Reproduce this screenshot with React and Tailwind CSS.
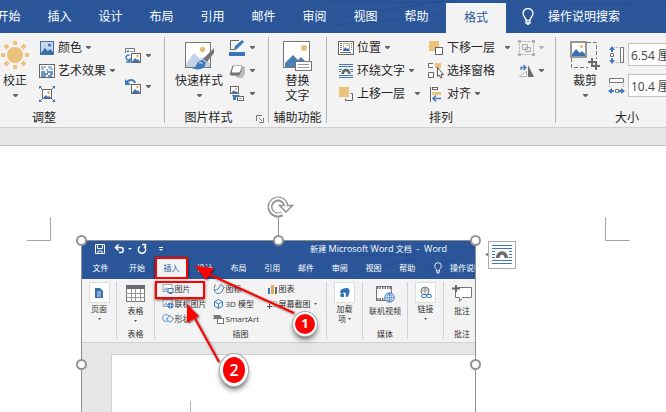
import React from "react";

const UI_FONT = "font-['Open_Sans','Noto_Sans_CJK_SC',sans-serif]";

/* ---------- shared drawing helpers ---------- */

function Svg({ w, h, children, className = "" }) {
  return (
    <svg
      width={w}
      height={h}
      viewBox={`0 0 ${w} ${h}`}
      fill="none"
      aria-hidden="true"
      className={`shrink-0 ${className}`}
    >
      {children}
    </svg>
  );
}

function Caret({ className = "text-[#666]" }) {
  return (
    <Svg w={5} h={3} className={className}>
      <path d="M0 0h5v1L3 3H2L0 1z" fill="currentColor" />
    </Svg>
  );
}

function TinyCaret() {
  return (
    <Svg w={3} h={2} className="text-[#555]">
      <path d="M0 0h3L1.500 2z" fill="currentColor" />
    </Svg>
  );
}

/* ---------- ribbon icons ---------- */

const SunIcon = () => (
  <Svg w={28} h={30}>
    <circle cx="14" cy="14" r="8" fill="#ecc27c" />
    <g stroke="#ecc27c" strokeWidth="4">
      <path d="M14 0v4M14 24v4M0 14h4M24 14h4" />
      <path d="M4 4l3 3M21 21l3 3M4 24l3-3M21 7l3-3" />
    </g>
  </Svg>
);

const ColorIcon = () => (
  <Svg w={16} h={16}>
    <rect x="1.500" y="1.500" width="13" height="13" fill="#c4d7ec" stroke="#41719c" />
    <path d="M2 13l4-5 3 3 2-2 3 3v2H2z" fill="#3a6ea8" />
    <circle cx="10.500" cy="5" r="1.500" fill="#3a6ea8" />
  </Svg>
);

const ArtisticIcon = () => (
  <Svg w={16} h={16}>
    <rect x="0.500" y="1.500" width="15" height="13" fill="#fff" stroke="#666" />
    <path d="M2 4h5M2 6h3M9 4h4M10 6h4M7 7h2" stroke="#4a7db8" />
    <path d="M2 9h4M8 9h6M2 11h7M11 11h3M2 13h5M9 13h4" stroke="#3b72b0" strokeWidth="1.500" />
  </Svg>
);

const CompressIcon = () => (
  <Svg w={16} h={16}>
    <rect x="3.500" y="3.500" width="9" height="9" fill="#fff" stroke="#666" />
    <path d="M4 12l3-3 2 2 1-1 2 2z" fill="#3a6ea8" />
    <circle cx="9.500" cy="6.500" r="1.200" fill="#e3a94c" />
    <path
      d="M0 0h3L0 3zM16 0h-3l3 3zM0 16h3L0 13zM16 16h-3l3-3z"
      fill="#3f7abd"
    />
    <path d="M1 1l2 2M15 1l-2 2M1 15l2-2M15 15l-2-2" stroke="#3f7abd" />
  </Svg>
);

const ChangePictureIcon = () => (
  <Svg w={17} h={17}>
    <path d="M0.500 6V1.500h9V5" stroke="#777" fill="#fff" />
    <path d="M1 5l2-2 2 2 2-1 2 1" fill="#3a6ea8" />
    <rect x="6.500" y="6.500" width="9" height="9" fill="#fff" stroke="#666" />
    <path d="M7 15l3-4 2 2 1-1 2 3z" fill="#3a6ea8" />
    <circle cx="12.500" cy="9" r="1.200" fill="#e3a94c" />
    <path d="M4.500 8C1 8 0 10 2 12.500L5 14M5 11v4H1" stroke="#3f7abd" strokeWidth="1.400" />
  </Svg>
);

const ResetPictureIcon = () => (
  <Svg w={17} h={17}>
    <rect x="6.500" y="6.500" width="9" height="9" fill="#fff" stroke="#666" />
    <path d="M7 15l3-4 2 2 1-1 2 3z" fill="#3a6ea8" />
    <circle cx="12.500" cy="9" r="1.200" fill="#e3a94c" />
    <path d="M1 5C4 1 9 1 10 5" stroke="#3f7abd" strokeWidth="1.800" />
    <path d="M0 1v6h6z" fill="#3f7abd" />
  </Svg>
);

const QuickStylesIcon = () => (
  <Svg w={31} h={30}>
    <rect x="1.500" y="1.500" width="25" height="25" fill="#fff" stroke="#777" />
    <circle cx="18.500" cy="8.500" r="2.700" fill="#e8be77" />
    <path d="M2 23l8-11 6 6 3-2 7 6v4H2z" fill="#c2d3e8" />
    <path d="M30 7v5l-7 9-4-3z" fill="#777" />
    <path d="M19 19l3 3c-1 3-2 5-5 6-4 1-7 0-9-1 4 0 4-3 6-6 1-1 3-2 5-2z" fill="#3f7abd" />
    <path d="M15 22c1-1 3-1 3 1" stroke="#fff" />
  </Svg>
);

const BorderPenIcon = () => (
  <Svg w={17} h={17}>
    <path d="M10 1.500H1.500v9H5" stroke="#666" />
    <path d="M5 11l1-4 7-6 2 2-7 7z" fill="#3f7abd" />
    <path d="M5 11l1-3 2 2z" fill="#777" />
    <rect x="0" y="13" width="16" height="4" fill="#3c73b9" />
  </Svg>
);

const EffectsIcon = () => (
  <Svg w={17} h={16}>
    <path d="M6 13l3 2h5l2-5V4l-2-1z" fill="#bbb" />
    <path d="M5 2.500h7.500c1 0 1.500 1 1 2L11 11c-.4 1-1 1.500-2 1.500H2.500c-1.500 0-2-1-1.500-2L3 4c.4-1 1-1.500 2-1.500z" fill="#737373" />
    <path d="M5.500 3H12c1 0 1 .6.700 1.400L11 8.500c-.3.600-.7 1-1.400 1H4c-1 0-1.200-.6-1-1.300L4.200 4c.2-.6.600-1 1.300-1z" fill="#fff" />
  </Svg>
);

const PictureLayoutIcon = () => (
  <Svg w={17} h={17}>
    <rect x="1.500" y="1.500" width="8" height="7" fill="#fff" stroke="#666" />
    <path d="M2 8l3-3 1 2 1-1 2 2z" fill="#3a6ea8" />
    <circle cx="7" cy="3.700" r="1" fill="#e3a94c" />
    <path d="M3 10h8l-2 2H7v3H4v-3z" fill="#3f7abd" />
    <rect x="8.500" y="11.500" width="6" height="4" fill="#fff" stroke="#666" />
    <path d="M10 13.500h3" stroke="#999" />
  </Svg>
);

const AltTextIcon = () => (
  <Svg w={30} h={30}>
    <rect x="0.500" y="0.500" width="26" height="26" fill="#fff" stroke="#777" />
    <circle cx="21" cy="7" r="3" fill="#e8be77" />
    <path d="M2 26v-4l8-8 5 5 3-3 8 8v2z" fill="#467fb8" />
    <rect x="12.500" y="20.500" width="16" height="9" fill="#fff" stroke="#777" />
    <path d="M15 23.500h11M15 26.500h11" stroke="#999" />
  </Svg>
);

const PositionIcon = () => (
  <Svg w={16} h={16}>
    <rect x="0.500" y="1.500" width="15" height="13" fill="#fff" stroke="#666" />
    <path d="M2 3.500h2M2 5.500h2M2 7.500h2M2 9.500h2M2 12.500h11M13 3.500h1M13 5.500h1M13 7.500h1M13 9.500h1" stroke="#777" />
    <rect x="5.500" y="3.500" width="6" height="7" fill="#fff" stroke="#b9b9b9" />
    <path d="M5 11l2-4 2 2 1-1 2 3z" fill="#3a6ea8" />
    <circle cx="9.700" cy="5.500" r="1" fill="#e3a94c" />
  </Svg>
);

const WrapIcon = () => (
  <Svg w={16} h={16}>
    <path d="M1 1.500h14M1 3.500h14M1 6.500h3M12 6.500h3M1 8.500h2M13 8.500h2M1 12.500h14M1 14.500h14" stroke="#3f7abd" />
    <path d="M3.500 11c0-7 9-7 9 0H10c0-3.500-4-3.500-4 0z" fill="#666" />
  </Svg>
);

const ForwardIcon = () => (
  <Svg w={16} h={16}>
    <rect x="1" y="1" width="10" height="10" fill="#ecc27c" />
    <path d="M12.500 7.500h2v7h-7v-2" stroke="#666" />
  </Svg>
);

const BackwardIcon = () => (
  <Svg w={16} h={16}>
    <rect x="1" y="1" width="10" height="10" fill="#ecc27c" />
    <rect x="7.500" y="7.500" width="7" height="7" fill="#fff" stroke="#666" />
  </Svg>
);

const SelectionPaneIcon = () => (
  <Svg w={16} h={17}>
    <path d="M5 1.500H0.500v4H5M0.500 10.500v5h5v-5z" stroke="#666" fill="#fff" />
    <rect x="7" y="1" width="6" height="5" fill="#ecc27c" />
    <path d="M9.500 5.500v9l2-1.500 1 3 1.500-.5-1-3h2.500z" fill="#fff" stroke="#555" />
  </Svg>
);

const AlignIcon = () => (
  <Svg w={16} h={16}>
    <path d="M2.500 1v15" stroke="#666" />
    <rect x="4.500" y="1.500" width="5" height="2" fill="#fff" stroke="#666" />
    <rect x="4" y="6" width="9" height="3" fill="#ecc27c" />
    <path d="M13 12.500H5M8 9.500l-3 3 3 3" stroke="#3f7abd" strokeWidth="1.500" />
  </Svg>
);

const GroupIcon = () => (
  <Svg w={17} h={16}>
    <path d="M3.500 1.500h10M3.500 14.500h10M1.500 4v8M15.500 4v8" stroke="#b5b5b5" strokeDasharray="2 1" />
    <path d="M4.500 4.500h5v5h-5zM7.500 7.500h5v4h-5z" stroke="#aaa" />
    <path d="M0 0h3v3H0zM14 0h3v3h-3zM0 13h3v3H0zM14 13h3v3h-3z" fill="#b0b0b0" />
  </Svg>
);

const RotateIcon = () => (
  <Svg w={17} h={16}>
    <path d="M8.500 8v5.500H1.500z" stroke="#b5b5b5" fill="#fff" />
    <path d="M10 2v12h6z" fill="#6b6b6b" />
    <path d="M3 7V4.500h4M5.500 2l2.500 2.500L5.500 7" stroke="#3f7abd" strokeWidth="1.300" />
  </Svg>
);

const CropIcon = () => (
  <Svg w={30} h={30}>
    <path d="M17 1.500h9.500V18M1.500 17v9.500H18" stroke="#777" strokeDasharray="4 2" />
    <rect x="1" y="1" width="15" height="15" fill="#fff" stroke="#777" strokeWidth="1.500" />
    <path d="M2 15v-2l4-5 4 4 2-2 3 3v2z" fill="#3a72b0" />
    <circle cx="11.500" cy="5.500" r="1.700" fill="#e8be77" />
    <path d="M22 17v8h8M18 21h8v8" stroke="#6b6b6b" strokeWidth="2" />
  </Svg>
);

const HeightIcon = () => (
  <Svg w={17} h={18}>
    <path d="M12.500 1.500h3v15h-3z" fill="#fff" stroke="#777" />
    <path d="M6 1.500h5M6 16.500h5" stroke="#aaa" strokeDasharray="1 1" />
    <path d="M4 0l3 4H5v2H3V4H1zM4 18l3-4H5v-2H3v2H1z" fill="#3f7abd" />
    <path d="M2.500 7.500h3v3h-3z" stroke="#777" />
  </Svg>
);

const WidthIcon = () => (
  <Svg w={17} h={18}>
    <path d="M1.500 1.500h14v4h-14z" fill="#fff" stroke="#777" />
    <path d="M1.500 7v4M15.500 7v4" stroke="#aaa" strokeDasharray="1 1" />
    <path d="M0 14l4-3v2h2v2H4v2zM17 14l-4-3v2h-2v2h2v2z" fill="#3f7abd" />
    <path d="M7.500 12.500h3v3h-3z" stroke="#777" />
  </Svg>
);

const LauncherIcon = () => (
  <Svg w={8} h={8}>
    <path d="M0.500 6V0.500H6M3 3l3 3M7.500 3v4.500H3" stroke="#777" />
  </Svg>
);

function BulbIcon({ w = 12, h = 17 }) {
  return (
    <svg width={w} height={h} viewBox="0 0 12 17" fill="none" aria-hidden="true" className="shrink-0">
      <path
        d="M4 12.500c0-3-3-4-3-7a5 5 0 0 1 10 0c0 3-3 4-3 7zM4 12.500v2.500h4v-2.500M5 16.500h2"
        stroke="#fff"
        strokeWidth="1.300"
      />
    </svg>
  );
}

const LayoutOptionsIcon = () => (
  <Svg w={20} h={20}>
    <path
      d="M0 0.500h20M0 3.500h20M0 6.500h3M17 6.500h3M0 9.500h3M17 9.500h3M0 12.500h3M17 12.500h3M0 15.500h20M0 18.500h20"
      stroke="#3f78b5"
    />
    <path d="M4 13c0-9 12-9 12 0h-3.500c0-4.500-5-4.500-5 0z" fill="#6b6b6b" />
  </Svg>
);

/* ---------- ribbon building blocks ---------- */

function RibbonGroup({ label, className = "", labelClass = "", extra, children }) {
  return (
    <section className={`relative flex h-[94px] shrink-0 flex-col ${className}`}>
      <div className="flex h-[75px] items-start">{children}</div>
      <div className={`text-center leading-[19px] whitespace-nowrap ${labelClass}`}>{label}</div>
      {extra}
    </section>
  );
}

const Separator = () => <div className="mt-1 h-[86px] w-px shrink-0 bg-[#b3b3b3]" />;

function BigButton({ icon, text, caret = true, className = "" }) {
  return (
    <button type="button" className={`flex shrink-0 flex-col items-center pt-2 ${className}`}>
      <span className="flex h-[30px] items-start">{icon}</span>
      <span className="mt-0.5 leading-[15px] whitespace-pre">{text}</span>
      {caret && (
        <span className="flex h-[15px] items-center">
          <Caret />
        </span>
      )}
    </button>
  );
}

function SmallButton({ icon, text, caret = true, wide = false, disabled = false, label }) {
  return (
    <button
      type="button"
      disabled={disabled}
      aria-label={label}
      className="flex h-[23px] items-center whitespace-nowrap"
    >
      {icon}
      {text && <span className="ml-[3px]">{text}</span>}
      {caret && (
        <span className={wide ? "ml-2.5" : "ml-1"}>
          <Caret className={disabled ? "text-[#b5b5b5]" : "text-[#666]"} />
        </span>
      )}
    </button>
  );
}

function SizeField({ icon, label, value, id }) {
  return (
    <div className="flex h-[31px] items-center">
      <label htmlFor={id} aria-label={label} className="w-5">
        {icon}
      </label>
      <input
        id={id}
        defaultValue={value}
        className="h-[23px] w-20 border border-[#c3c3c3] bg-white px-0.5 text-[#444] outline-none"
      />
    </div>
  );
}

function TabBar() {
  const tabs = ["开始", "插入", "设计", "布局", "引用", "邮件", "审阅", "视图", "帮助"];
  return (
    <nav className="relative flex h-[33px] overflow-hidden bg-[#2b579a] text-white">
      <svg
        width="360"
        height="33"
        viewBox="0 0 360 33"
        fill="none"
        aria-hidden="true"
        className="absolute top-0 left-[306px]"
      >
        <path
          d="M22 2h130M36 17l100-16M28 25l110-10M190 1l60 32M215 1l45 26M280 27l50-25M300 33l60-30M260 4h70"
          stroke="#264f90"
        />
      </svg>
      <div className="relative -ml-[17px] flex shrink-0">
        {tabs.map((t) => (
          <button key={t} type="button" className="w-[51px] leading-[33px]">
            {t}
          </button>
        ))}
        <button
          type="button"
          aria-current="page"
          className="mt-[3px] ml-1 w-[60px] bg-[#f3f3f3] leading-[28px] text-[#2b579a]"
        >
          格式
        </button>
        <button type="button" className="ml-4 flex items-center gap-3.5 whitespace-nowrap">
          <BulbIcon />
          操作说明搜索
        </button>
      </div>
    </nav>
  );
}

function Ribbon() {
  return (
    <div className="flex overflow-hidden border-b border-[#cfcfcf] bg-[#f3f3f3]">
      <RibbonGroup label="调整" className="w-[164px]" labelClass="pr-[76px]">
        <BigButton icon={<SunIcon />} text="校正" className="w-[30px]" />
        <div className="ml-[9px] pt-[3px]">
          <SmallButton icon={<ColorIcon />} text="颜色" />
          <SmallButton icon={<ArtisticIcon />} text="艺术效果" />
          <SmallButton icon={<CompressIcon />} caret={false} label="压缩图片" />
        </div>
        <div className="ml-2.5 flex flex-col gap-2 pt-[11px]">
          <SmallButton icon={<ChangePictureIcon />} label="更改图片" />
          <SmallButton icon={<ResetPictureIcon />} label="重置图片" />
        </div>
      </RibbonGroup>
      <Separator />
      <RibbonGroup
        label="图片样式"
        className="w-[103px]"
        labelClass="pr-4"
        extra={
          <button type="button" aria-label="设置图片格式" className="absolute right-1 bottom-1">
            <LauncherIcon />
          </button>
        }
      >
        <BigButton icon={<QuickStylesIcon />} text="快速样式" className="ml-2.5 w-[48px]" />
        <div className="ml-1.5 pt-[3px]">
          <SmallButton icon={<BorderPenIcon />} label="图片边框" />
          <SmallButton icon={<EffectsIcon />} label="图片效果" />
          <SmallButton icon={<PictureLayoutIcon />} label="图片版式" />
        </div>
      </RibbonGroup>
      <Separator />
      <RibbonGroup label="辅助功能" className="w-[57px]">
        <BigButton icon={<AltTextIcon />} text={"替换\n文字"} caret={false} className="w-full" />
      </RibbonGroup>
      <Separator />
      <RibbonGroup label="排列" className="w-[228px]">
        <div className="ml-[11px] w-[90px] pt-[3px]">
          <SmallButton icon={<PositionIcon />} text="位置" />
          <SmallButton icon={<WrapIcon />} text="环绕文字" />
          <SmallButton icon={<ForwardIcon />} text="上移一层" wide />
        </div>
        <div className="w-[90px] pt-[3px]">
          <SmallButton icon={<BackwardIcon />} text="下移一层" wide />
          <SmallButton icon={<SelectionPaneIcon />} text="选择窗格" caret={false} />
          <SmallButton icon={<AlignIcon />} text="对齐" />
        </div>
        <div className="pt-[3px]">
          <SmallButton icon={<GroupIcon />} label="组合" disabled />
          <SmallButton icon={<RotateIcon />} label="旋转" />
        </div>
      </RibbonGroup>
      <Separator />
      <RibbonGroup label="大小" className="w-[142px]">
        <BigButton icon={<CropIcon />} text="裁剪" className="ml-[13px] w-[32px]" />
        <div className="ml-[7px] pt-1.5">
          <SizeField id="pic-height" label="高度" icon={<HeightIcon />} value="6.54 厘米" />
          <SizeField id="pic-width" label="宽度" icon={<WidthIcon />} value="10.4 厘米" />
        </div>
      </RibbonGroup>
    </div>
  );
}

/* ---------- the picture inserted in the document ---------- */

const MiniSeparator = () => <div className="mt-[3px] h-[57px] w-px shrink-0 bg-[#d0d0d0]" />;

function MiniGroup({ label, className = "", children }) {
  return (
    <div className={`flex h-[63px] shrink-0 flex-col ${className}`}>
      <div className="flex h-[49px] items-start justify-center">{children}</div>
      <div className="text-center leading-[12px]">{label}</div>
    </div>
  );
}

function MiniBig({ icon, text, boxed = false, second }) {
  return (
    <button type="button" className="flex flex-col items-center pt-[3px] whitespace-nowrap">
      <span
        className={`flex items-center justify-center ${
          boxed ? "h-[21px] w-[21px] border border-[#dcdcdc] bg-white" : "h-[23px] w-[21px]"
        }`}
      >
        {icon}
      </span>
      <span className="mt-px leading-[10px]">{text}</span>
      <span className="flex h-2.5 items-center gap-0.5 leading-[10px]">{second}</span>
    </button>
  );
}

function MiniSmall({ icon, text, caret = false }) {
  return (
    <button type="button" className="flex h-[15px] items-center gap-px whitespace-nowrap">
      {icon}
      {text}
      {caret && (
        <span className="ml-0.5">
          <TinyCaret />
        </span>
      )}
    </button>
  );
}

const PagesIcon = () => (
  <Svg w={10} h={12}>
    <path d="M1 1h5l3 3v7H1z" fill="#3a6fae" />
    <path d="M3 5h4M3 7h4M3 9h4" stroke="#cfe0f3" />
  </Svg>
);

const TableIcon = () => (
  <Svg w={19} h={17}>
    <rect x="0.500" y="0.500" width="18" height="16" fill="#fff" stroke="#777" />
    <path d="M0 0h19v4H0z" fill="#6b6b6b" />
    <path d="M0 8.500h19M0 12.500h19M5.500 4v13M9.500 4v13M14.500 4v13" stroke="#999" />
  </Svg>
);

const MiniPicture = () => (
  <Svg w={12} h={10}>
    <rect x="1" y="0.500" width="9" height="7" fill="#fff" stroke="#aaa" />
    <path d="M1 7l3-4 2 3z" fill="#8fb4dc" />
    <rect x="6" y="4.500" width="5" height="4" fill="#fff" stroke="#3f7abd" />
    <path d="M7 9.500h3" stroke="#3f7abd" />
  </Svg>
);

const MiniOnlinePicture = () => (
  <Svg w={12} h={10}>
    <rect x="1" y="0.500" width="9" height="7" fill="#fff" stroke="#aaa" />
    <path d="M1 7l3-4 2 3z" fill="#8fb4dc" />
    <circle cx="8.500" cy="6.500" r="3" fill="#3f7abd" />
    <path d="M6 6.500h5M8.500 4v5" stroke="#cfe0f3" strokeWidth="0.700" />
  </Svg>
);

const MiniShapes = () => (
  <Svg w={12} h={10}>
    <circle cx="4" cy="4" r="3.500" stroke="#6a9bd0" />
    <path d="M8 1.500L11.500 5 8 8.500 4.500 5z" fill="#f3f3f3" stroke="#3f7abd" />
  </Svg>
);

const MiniIconsIcon = () => (
  <Svg w={12} h={10}>
    <path d="M6 4c0-4 4-4 4-1l1.500.5L10 5c0 3-3 4.500-5 4.500S1.500 8 1 5c1.500 1.500 4 1 5-1z" stroke="#3f7abd" />
    <path d="M3 1c-2 0-2 2-1 3" stroke="#777" />
  </Svg>
);

const Mini3D = () => (
  <Svg w={12} h={10}>
    <path d="M5.500.5l4 2.200v4.600l-4 2.200-4-2.200V2.700zM1.500 2.700l4 2.300 4-2.300M5.500 5v4.500" stroke="#3b7dbb" />
  </Svg>
);

const MiniSmartArt = () => (
  <Svg w={12} h={10}>
    <path d="M0 1h7l2 2-2 2H0l1-2z" fill="#777" />
    <rect x="4.500" y="4.500" width="6" height="5" fill="#fff" stroke="#777" />
  </Svg>
);

const MiniChart = () => (
  <Svg w={11} h={10}>
    <path d="M1 4h2v6H1z" fill="#3f7abd" />
    <path d="M4 1h3v9H4z" fill="#e0a95a" />
    <path d="M8 3h2v7H8z" fill="#666" />
  </Svg>
);

const MiniScreenshot = () => (
  <Svg w={11} h={10}>
    <rect x="2.500" y="2.500" width="7" height="5" fill="#fff" stroke="#888" strokeDasharray="1 1" />
    <path d="M0 7.500h5M2.500 5v5" stroke="#555" />
  </Svg>
);

const AddInIcon = () => (
  <Svg w={11} h={11}>
    <path d="M3 2l4-1c3 0 4 2 3.500 4L9 10l-2.500-.5L7 6 5 5.500 2 7 1 4z" fill="#2f75b5" />
    <path d="M1 8l2-2 2 1v3H2z" fill="#2f75b5" />
  </Svg>
);

const VideoIcon = () => (
  <Svg w={19} h={18}>
    <rect x="0.500" y="1.500" width="15" height="14" fill="#fff" stroke="#777" />
    <path d="M1 3h14M1 14h8" stroke="#777" strokeWidth="2" strokeDasharray="1.500 1" />
    <circle cx="13.500" cy="12.500" r="4.700" fill="#fff" stroke="#3f7abd" />
    <path d="M9 12.500h9M13.500 8v9M10 10h7M10 15h7M13.500 8c-3 3-3 6 0 9M13.500 8c3 3 3 6 0 9" stroke="#3f7abd" strokeWidth="0.700" />
  </Svg>
);

const LinkIcon = () => (
  <Svg w={13} h={13}>
    <circle cx="6" cy="5" r="4" stroke="#777" />
    <path d="M2 5h8M6 1v8M3 3h6" stroke="#777" strokeWidth="0.700" />
    <rect x="2.500" y="8.500" width="5" height="3" rx="1.500" fill="#fff" stroke="#3f7abd" />
    <rect x="7.500" y="8.500" width="5" height="3" rx="1.500" fill="#fff" stroke="#3f7abd" />
  </Svg>
);

const CommentIcon = () => (
  <Svg w={20} h={20}>
    <path d="M5.500 3.500h14v10h-9l-3 4v-4h-4V8" fill="#fff" stroke="#777" />
    <path d="M4 1v7M0 4.500h8" stroke="#666" strokeWidth="2" />
  </Svg>
);

function MiniTitleBar() {
  return (
    <div className="flex h-4 items-center">
      <svg width="90" height="12" viewBox="0 0 90 12" fill="none" stroke="#fff" aria-hidden="true">
        <path d="M13.500 1.500h9v9h-9zM15.500 1.500v4h5v-4M16 10V8h4v2" />
        <path d="M34 4.500h5c3 0 3 5 0 5h-2M36.500 1.500l-3 3 3 3" strokeWidth="1.500" />
        <path d="M46 5h4l-2 2z" fill="#fff" stroke="none" />
        <path d="M58 3.500a3.700 3.700 0 1 0 4 0M60 1.500h3.500v3" strokeWidth="1.400" />
        <path d="M77 4.500h4" />
        <path d="M77 6h4l-2 2z" fill="#fff" stroke="none" />
      </svg>
      <span className="ml-auto pr-7 text-[9px] whitespace-pre">
        <span className="text-[8px]">新建</span> Microsoft Word <span className="text-[8px]">文档</span>
        {"  -  Word"}
      </span>
    </div>
  );
}

function MiniTabs() {
  const rest = ["设计", "布局", "引用", "邮件", "审阅", "视图", "帮助"];
  return (
    <div className="flex h-[22px] whitespace-nowrap">
      <button type="button" className="w-[37px] shrink-0">文件</button>
      <button type="button" className="w-9 shrink-0">开始</button>
      <button type="button" className="w-[33px] shrink-0 border-2 border-[#f00] bg-[#f3f3f3] text-[#2b579a] shadow-sm shadow-black/60">
        插入
      </button>
      <div className="flex w-[236px] shrink-0">
        {rest.map((t) => (
          <button key={t} type="button" className="flex-1">
            {t}
          </button>
        ))}
      </div>
      <button type="button" className="ml-2.5 flex shrink-0 items-center gap-2">
        <BulbIcon w={8} h={12} />
        操作说明
      </button>
    </div>
  );
}

function MiniRibbon() {
  return (
    <div className="flex h-16 overflow-hidden border-b border-[#d0d0d0] bg-[#f3f3f3] text-[#333]">
      <MiniGroup className="w-[34px]">
        <MiniBig boxed icon={<PagesIcon />} text="页面" second={<TinyCaret />} />
      </MiniGroup>
      <MiniSeparator />
      <MiniGroup className="w-[37px]" label="表格">
        <MiniBig icon={<TableIcon />} text="表格" second={<TinyCaret />} />
      </MiniGroup>
      <MiniSeparator />
      <MiniGroup className="w-[171px]" label="插图">
        <div className="w-[51px] pt-0.5">
          <MiniSmall icon={<MiniPicture />} text="图片" />
          <MiniSmall icon={<MiniOnlinePicture />} text="联机图片" />
          <MiniSmall icon={<MiniShapes />} text="形状" />
        </div>
        <div className="w-[54px] pt-0.5">
          <MiniSmall icon={<MiniIconsIcon />} text="图标" />
          <MiniSmall icon={<Mini3D />} text="3D 模型" />
          <MiniSmall icon={<MiniSmartArt />} text="SmartArt" />
        </div>
        <div className="w-[53px] pt-0.5">
          <MiniSmall icon={<MiniChart />} text="图表" />
          <MiniSmall icon={<MiniScreenshot />} text="屏幕截图" caret />
        </div>
      </MiniGroup>
      <MiniSeparator />
      <MiniGroup className="w-[35px]">
        <MiniBig
          boxed
          icon={<AddInIcon />}
          text="加载"
          second={
            <>
              项
              <TinyCaret />
            </>
          }
        />
      </MiniGroup>
      <MiniSeparator />
      <MiniGroup className="w-11" label="媒体">
        <MiniBig icon={<VideoIcon />} text="联机视频" />
      </MiniGroup>
      <MiniSeparator />
      <MiniGroup className="w-[35px]">
        <MiniBig boxed icon={<LinkIcon />} text="链接" second={<TinyCaret />} />
      </MiniGroup>
      <MiniSeparator />
      <MiniGroup className="w-9" label="批注">
        <MiniBig icon={<CommentIcon />} text="批注" />
      </MiniGroup>
    </div>
  );
}

function Annotations() {
  return (
    <>
      <div className="absolute top-[40px] left-[73px] h-[18px] w-[50px] border-2 border-[#f00] shadow-sm shadow-black/50" />
      <svg width="240" height="150" viewBox="0 0 240 150" aria-hidden="true" className="absolute top-0 left-0 drop-shadow-[1px_1px_1px_rgba(0,0,0,0.5)]">
        <g stroke="#f00" strokeWidth="2">
          <path d="M124 32l88 40M110 72l27 49" />
        </g>
        <path d="M113 25l19 2-8 12zM105 63l12 12-12 7z" fill="#f00" />
      </svg>
      <div className="absolute top-[71px] left-[211px] flex h-6 w-6 items-center justify-center rounded-full border-2 border-white bg-[#f00] text-[13px] font-bold text-white shadow-md ring-1 shadow-black/60 ring-[#aaa]">
        1
      </div>
      <div className="absolute top-[113px] left-[138px] flex h-8 w-7 items-center justify-center rounded-[50%] border-3 border-white bg-[#f00] text-[16px] font-semibold text-white shadow-md ring-1 shadow-black/60 ring-[#aaa]">
        2
      </div>
    </>
  );
}

function Handle({ className }) {
  return (
    <span className={`absolute h-[11px] w-[11px] rounded-full border-2 border-[#929292] bg-white ${className}`} />
  );
}

function InsertedPicture() {
  return (
    <figure className="relative flex w-[395px] shrink-0 flex-col border-x border-t border-[#8f8f8f] text-[8px]">
      <div className="relative overflow-hidden bg-[#2b579a] text-white">
        <svg width="150" height="38" viewBox="0 0 150 38" fill="none" aria-hidden="true" className="absolute top-0 right-0">
          <path d="M10 14h80M20 34l70-16M60 4l60 30M95 2l50 30M90 36l60-26M100 6h50" stroke="#264f90" />
        </svg>
        <div className="relative">
          <MiniTitleBar />
          <MiniTabs />
        </div>
      </div>
      <MiniRibbon />
      <div className="flex-1 bg-[#e6e6e6] pt-[11px] pl-[29px]">
        <div className="h-full border-t border-l border-[#d0d0d0] bg-white pt-[46px] pl-[78px]">
          <div className="h-3 w-px bg-[#b5b5b5]" />
        </div>
      </div>
      <Annotations />

      <svg width="28" height="42" viewBox="0 0 28 42" fill="none" aria-hidden="true" className="absolute -top-[45px] left-[184px]">
        <path d="M12.500 21v20" stroke="#929292" />
        <path d="M20 10A8 8 0 1 0 16 18" stroke="#929292" strokeWidth="5" />
        <path d="M13.500 9.500h13l-6.500 6.500z" fill="#fff" stroke="#929292" strokeWidth="1.500" />
        <path d="M20 10A8 8 0 1 0 15.500 17.700" stroke="#fff" strokeWidth="2" />
      </svg>
      <Handle className="-top-1.5 -left-1.5" />
      <Handle className="-top-1.5 left-[191px]" />
      <Handle className="-top-1.5 -right-1.5" />
      <Handle className="top-[118px] -left-1.5" />
      <Handle className="top-[118px] -right-1.5" />
    </figure>
  );
}

function DocumentPage() {
  return (
    <main className="flex flex-1 items-stretch overflow-hidden border-t border-[#c0c0c0] bg-white pt-[71px] pr-9 pl-[27px]">
      <div className="h-6 w-6 shrink-0 border-r border-b border-[#a5a5a5]" />
      <div className="ml-[30px] flex shrink-0 pt-[23px]">
        <InsertedPicture />
        <div className="ml-[9px] flex h-7 items-center">
          <Svg w={3} h={3}>
            <path d="M3 0v3L0 1.500z" fill="#666" />
          </Svg>
        </div>
        <button
          type="button"
          aria-label="布局选项"
          className="mt-px flex h-7 w-7 items-center justify-center border border-[#ababab] bg-white"
        >
          <LayoutOptionsIcon />
        </button>
      </div>
      <div className="ml-auto h-6 w-[25px] shrink-0 border-b border-l border-[#a5a5a5]" />
    </main>
  );
}

export default function App() {
  return (
    <div className={`flex min-h-screen flex-col overflow-hidden bg-[#e6e6e6] text-[12px] text-[#262626] ${UI_FONT}`}>
      <TabBar />
      <Ribbon />
      <div className="h-[17px]" />
      <DocumentPage />
    </div>
  );
}
